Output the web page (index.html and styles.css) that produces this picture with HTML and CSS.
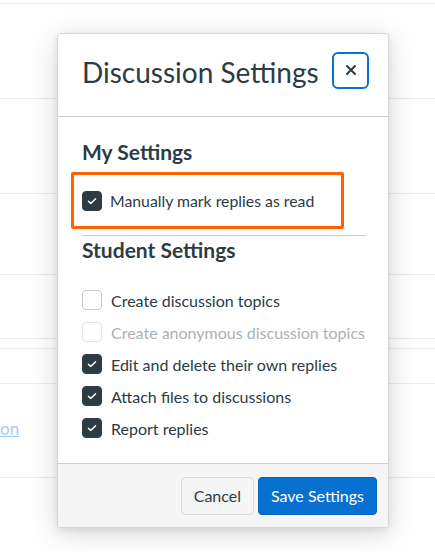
FILE: index.html
```html
<!DOCTYPE html>
<html>
<head>
<meta charset="utf-8">
<link rel="stylesheet" href="styles.css">
</head>
<body>
<div class="page">
  <div class="row r1"></div>
  <div class="row r2"></div>
  <div class="row r3"></div>
  <div class="row r4"></div>
  <div class="row r5"></div>
  <div class="row r6"></div>
  <div class="row r7"></div>
  <div class="row r8"><a class="bg-link" href="#">on</a></div>
</div>

<div class="modal">
  <div class="modal-header">
    <h2 class="modal-title">Discussion Settings</h2>
    <button class="close-btn" aria-label="Close">
      <svg width="12" height="12" viewBox="0 0 12 12"><path d="M2 2 L10 10 M10 2 L2 10" stroke="#2d3b45" stroke-width="2" stroke-linecap="round"/></svg>
    </button>
  </div>
  <div class="modal-body">
    <h3 class="section-title">My Settings</h3>
    <div class="highlight">
      <label class="check-row">
        <span class="box checked"><svg width="20" height="20" viewBox="0 0 20 20"><path d="M6 10.2 L8.6 12.8 L14 7.4" fill="none" stroke="#fff" stroke-width="1.6" stroke-linecap="round" stroke-linejoin="round"/></svg></span>
        <span class="label">Manually mark replies as read</span>
      </label>
    </div>
    <div class="separator"></div>
    <h3 class="section-title student">Student Settings</h3>
    <div class="list">
      <label class="check-row"><span class="box"></span><span class="label">Create discussion topics</span></label>
      <label class="check-row disabled"><span class="box"></span><span class="label">Create anonymous discussion topics</span></label>
      <label class="check-row"><span class="box checked"><svg width="20" height="20" viewBox="0 0 20 20"><path d="M6 10.2 L8.6 12.8 L14 7.4" fill="none" stroke="#fff" stroke-width="1.6" stroke-linecap="round" stroke-linejoin="round"/></svg></span><span class="label">Edit and delete their own replies</span></label>
      <label class="check-row"><span class="box checked"><svg width="20" height="20" viewBox="0 0 20 20"><path d="M6 10.2 L8.6 12.8 L14 7.4" fill="none" stroke="#fff" stroke-width="1.6" stroke-linecap="round" stroke-linejoin="round"/></svg></span><span class="label">Attach files to discussions</span></label>
      <label class="check-row"><span class="box checked"><svg width="20" height="20" viewBox="0 0 20 20"><path d="M6 10.2 L8.6 12.8 L14 7.4" fill="none" stroke="#fff" stroke-width="1.6" stroke-linecap="round" stroke-linejoin="round"/></svg></span><span class="label">Report replies</span></label>
    </div>
  </div>
  <div class="modal-footer">
    <button class="btn btn-secondary">Cancel</button>
    <button class="btn btn-primary">Save Settings</button>
  </div>
</div>
</body>
</html>
```

FILE: styles.css
```css
html, body {
  margin: 0;
  padding: 0;
  background: #ffffff;
}
body {
  font-family: Lato, "Open Sans", "Liberation Sans", sans-serif;
  color: #2d3b45;
  width: 435px;
  height: 552px;
  overflow: hidden;
  position: relative;
}
.page {
  display: flex;
  flex-direction: column;
}
.row {
  border-bottom: 1px solid #ebebeb;
  box-sizing: border-box;
  position: relative;
  flex: none;
}
.r1 { height: 4px; border-bottom-color: #f1f1f1; }
.r2 { height: 95px; }
.r3 { height: 95px; }
.r4 { height: 81px; }
.r5 { height: 64px; }
.r6 { height: 10px; }
.r7 { height: 35px; }
.r8 { height: 94px; }
.bg-link {
  position: absolute;
  left: 0;
  top: 34px;
  font-size: 17px;
  color: #a8cbee;
  text-decoration: underline;
}

.modal {
  position: absolute;
  left: 57px;
  top: 33px;
  width: 332px;
  height: 495px;
  box-sizing: border-box;
  background: #fff;
  border: 1px solid #d3d7da;
  border-radius: 4px;
  box-shadow: 0 6px 28px rgba(0, 0, 0, 0.16), 0 2px 6px rgba(0, 0, 0, 0.08);
  display: flex;
  flex-direction: column;
  overflow: hidden;
}
.modal-header {
  height: 83px;
  box-sizing: border-box;
  border-bottom: 1px solid #c7cdd1;
  display: flex;
  align-items: center;
  justify-content: space-between;
  padding: 0 19px 5px 24px;
  flex: none;
}
.modal-title {
  margin: 0;
  font-size: 28px;
  font-weight: 400;
  color: #2d3b45;
  line-height: 1.2;
}
.close-btn {
  width: 37px;
  height: 37px;
  box-sizing: border-box;
  border: 2px solid #0770d0;
  border-radius: 6px;
  background: #fff;
  display: flex;
  align-items: center;
  justify-content: center;
  padding: 0;
  margin-top: -5px;
}
.modal-body {
  flex: 1;
  padding: 22px 23px 0 24px;
}
.section-title {
  margin: 0;
  font-size: 21px;
  font-weight: 700;
  line-height: 26px;
  color: #2d3b45;
}
.student {
  margin-top: 1px;
}
.highlight {
  margin: 7px 0 0 -11px;
  width: 273px;
  height: 57px;
  box-sizing: border-box;
  border: 3px solid #ff6200;
  border-radius: 2px;
  padding: 0 8px;
  display: flex;
  align-items: center;
}
.separator {
  margin-top: 6px;
  border-top: 1px solid #c7cdd1;
  width: 284px;
}
.list {
  margin-top: 21px;
  display: flex;
  flex-direction: column;
}
.check-row {
  display: flex;
  align-items: center;
  gap: 9px;
  height: 32px;
  font-size: 16px;
  color: #2d3b45;
}
.highlight .check-row {
  gap: 8px;
  font-size: 15.8px;
}
.box {
  width: 20px;
  height: 20px;
  box-sizing: border-box;
  border: 1px solid #c7cdd1;
  border-radius: 4px;
  background: #fff;
  display: flex;
  align-items: center;
  justify-content: center;
  flex: none;
}
.box.checked {
  background: #2d3b45;
  border-color: #2d3b45;
}
.box svg { display: block; }
.check-row.disabled { color: #a9b2b8; }
.check-row.disabled .box { border-color: #e3e6e8; }

.modal-footer {
  height: 64px;
  box-sizing: border-box;
  background: #f5f5f5;
  border-top: 1px solid #c7cdd1;
  display: flex;
  justify-content: flex-end;
  align-items: center;
  gap: 4px;
  padding: 0 11px;
  flex: none;
}
.btn {
  height: 38px;
  box-sizing: border-box;
  border-radius: 4px;
  font-family: Lato, "Open Sans", "Liberation Sans", sans-serif;
  font-size: 16px;
  padding: 0 12px;
  border: 1px solid transparent;
}
.btn-secondary {
  background: #f5f5f5;
  border-color: #d5d9dc;
  color: #2d3b45;
}
.btn-primary {
  background: #0770d0;
  border-color: #0562b8;
  color: #fff;
}
```
